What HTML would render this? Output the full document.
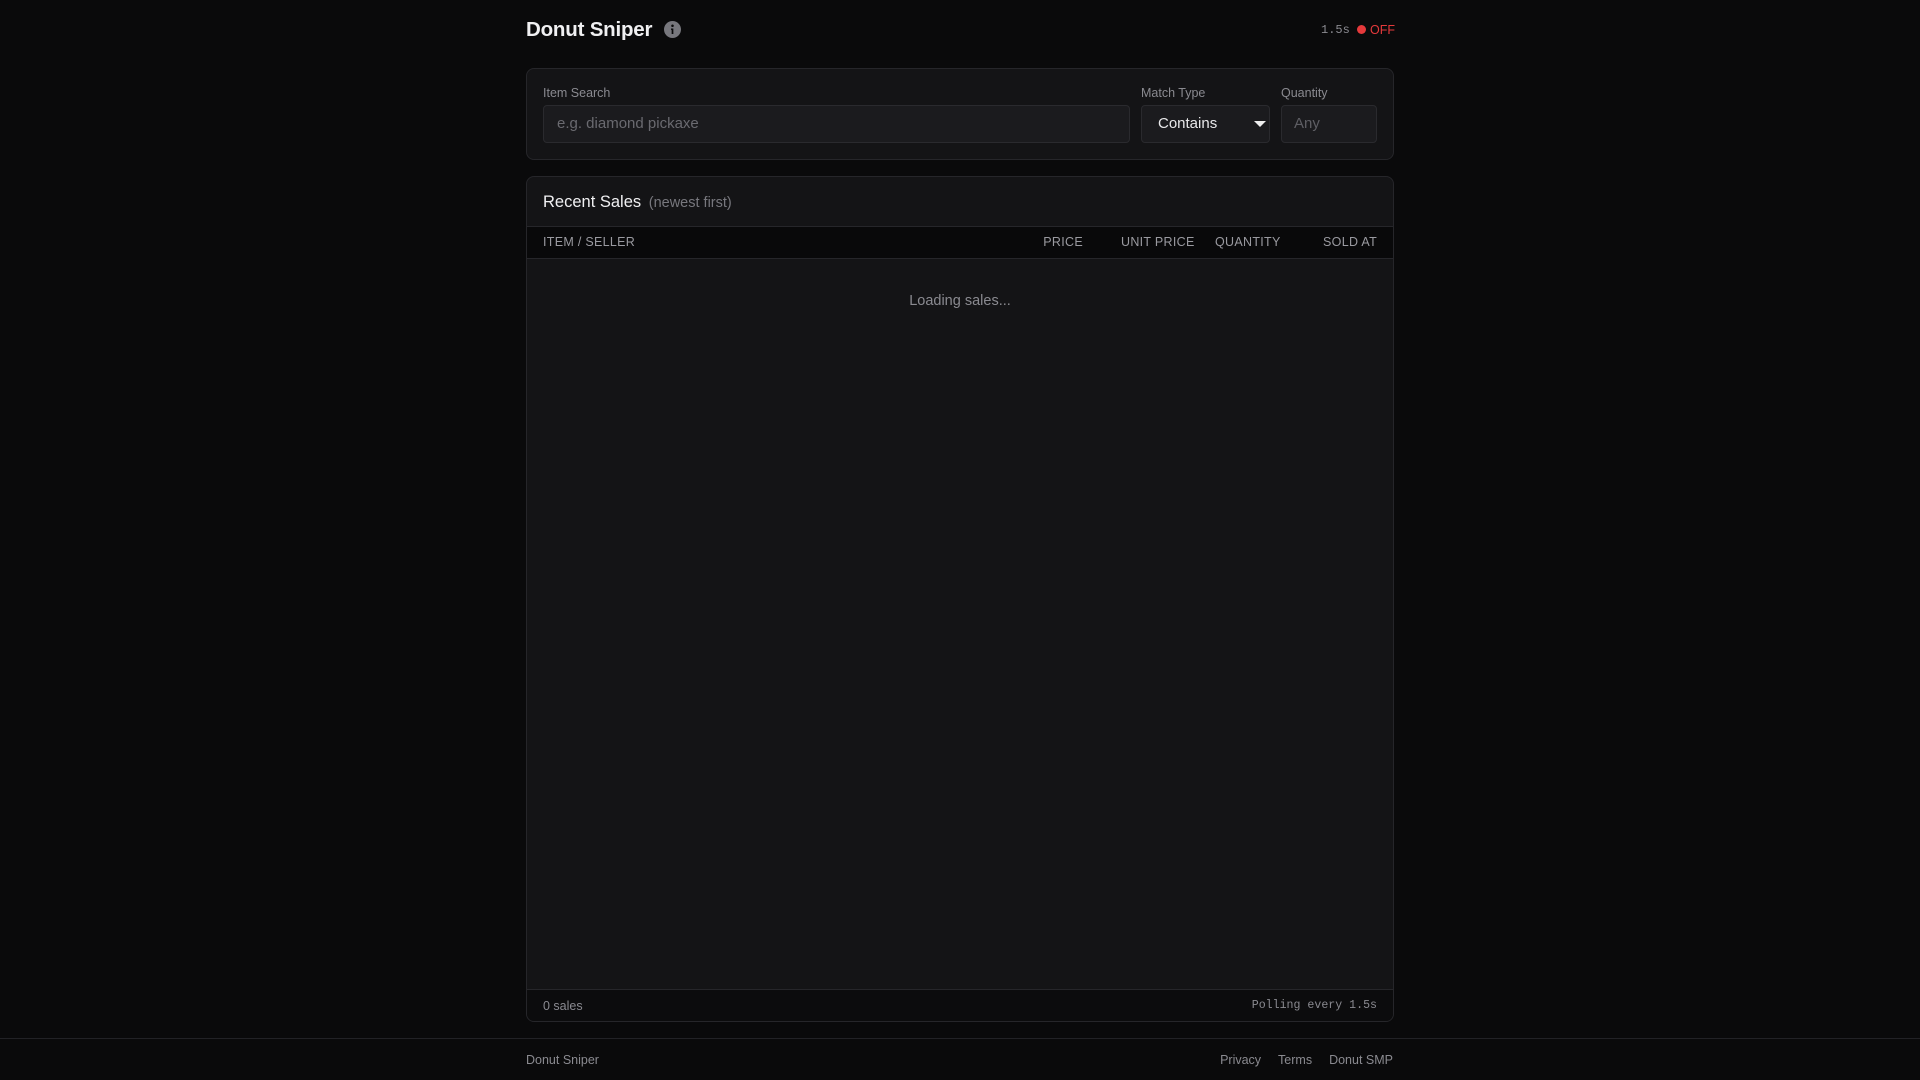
<!DOCTYPE html>
<html><head><meta charset="utf-8"><style>
*{box-sizing:border-box;margin:0;padding:0}
body{width:1920px;height:1080px;background:#0a0a0b;font-family:"Liberation Sans",sans-serif;color:#e8e8ea;position:relative;overflow:hidden}
.a{position:absolute}
.mono{font-family:"Liberation Mono",monospace}
.card{position:absolute;left:526px;width:868px;background:#141416;border:1px solid #26262a;border-radius:8px}
.lbl{position:absolute;top:16px;font-size:12.5px;color:#8a8a90}
.inp{position:absolute;top:36px;height:38px;background:#1b1b1e;border:1px solid #2a2a2e;border-radius:4px;font-size:15px;color:#6a6a70;line-height:36px;padding-left:12px}
.th{position:absolute;top:58px;font-size:12.5px;color:#9a9aa0;letter-spacing:.3px}
</style></head><body>
<div class="a" style="left:526px;top:18px;font-size:20.5px;font-weight:bold;color:#f0f0f2;letter-spacing:-0.2px">Donut Sniper</div>
<svg class="a" style="left:664px;top:21px" width="17" height="17" viewBox="0 0 16 16"><circle cx="8" cy="8" r="8" fill="#77777d"/><circle cx="8" cy="4.5" r="1.2" fill="#0a0a0b"/><path d="M6.6 7h2.2v5.2H7.2V8.3H6.6z" fill="#0a0a0b"/></svg>
<div class="a mono" style="left:1321px;top:23px;font-size:12px;color:#8a8a90">1.5s</div>
<div class="a" style="left:1357px;top:25px;width:9px;height:9px;border-radius:50%;background:#e5393b"></div>
<div class="a" style="left:1370px;top:23px;font-size:12.5px;color:#e5393b">OFF</div>

<div class="card" style="top:68px;height:92px">
<div class="lbl" style="left:16px;top:17px">Item Search</div>
<div class="inp" style="left:16px;width:587px;padding-left:13px">e.g. diamond pickaxe</div>
<div class="lbl" style="left:614px;top:17px">Match Type</div>
<div class="inp" style="left:614px;width:129px;color:#e8e8ea;padding-left:16px">Contains<span style="position:absolute;right:3px;top:15px;width:0;height:0;border-left:6px solid transparent;border-right:6px solid transparent;border-top:6px solid #eee"></span></div>
<div class="lbl" style="left:754px;top:17px">Quantity</div>
<div class="inp" style="left:754px;width:96px;color:#5e5e64">Any</div>
</div>

<div class="card" style="top:176px;height:846px;overflow:hidden">
<div class="a" style="left:16px;top:16px;font-size:16.5px;color:#f0f0f2">Recent Sales <span style="font-size:14.5px;color:#77777d;margin-left:3px">(newest first)</span></div>
<div class="a" style="left:0;top:49px;width:100%;height:33px;background:#09090a;border-top:1px solid #26262a;border-bottom:1px solid #26262a"></div>
<div class="th" style="left:16px">ITEM / SELLER</div>
<div class="th" style="right:310px">PRICE</div>
<div class="th" style="left:594px">UNIT PRICE</div>
<div class="th" style="left:688px">QUANTITY</div>
<div class="th" style="right:16px">SOLD AT</div>
<div class="a" style="left:0;width:100%;top:116px;text-align:center;font-size:14.5px;color:#8a8a90">Loading sales...</div>
<div class="a" style="left:0;top:812px;width:100%;height:34px;background:#0c0c0d;border-top:1px solid #26262a"></div>
<div class="a" style="left:16px;top:822px;font-size:12.5px;color:#8a8a90">0 sales</div>
<div class="a mono" style="right:16px;top:822px;font-size:11.6px;color:#8a8a90">Polling every 1.5s</div>
</div>

<div class="a" style="left:0;top:1038px;width:1920px;height:1px;background:#222226"></div>
<div class="a" style="left:526px;top:1053px;font-size:12.5px;color:#8a8a90">Donut Sniper</div>
<div class="a" style="right:527px;top:1053px;font-size:12.5px;color:#8a8a90">Privacy<span style="margin-left:17px">Terms</span><span style="margin-left:17px">Donut SMP</span></div>
</body></html>
